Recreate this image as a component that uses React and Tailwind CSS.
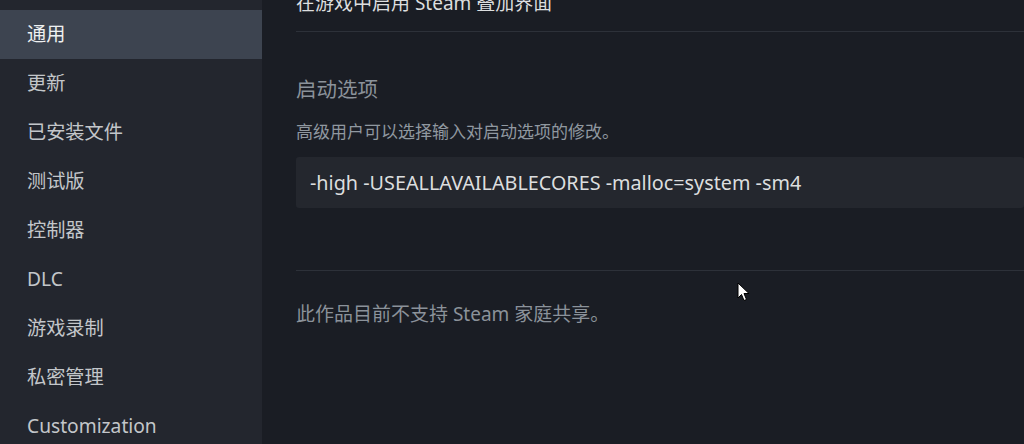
const items = ["通用", "更新", "已安装文件", "测试版", "控制器", "DLC", "游戏录制", "私密管理", "Customization"];

const font = { fontFamily: '"Noto Sans", "Noto Sans CJK SC", sans-serif' };

export default function App() {
  return (
    <div className="relative flex h-[444px] w-[1024px] overflow-hidden bg-[#1a1d24]" style={font}>
      <div className="w-[262px] shrink-0 bg-[#23262e] pt-[10px]">
        {items.map((label, i) => (
          <div
            key={label}
            className={`flex h-[49px] items-center pl-[27px] text-[19.2px] ${
              i === 0 ? "bg-[#3d4450] text-[#eef0f1]" : "text-[#c3c6ca]"
            }`}
          >
            {label}
          </div>
        ))}
      </div>

      <div className="flex-1 pl-[34px]">
        <div className="-mt-[10px] text-[19px] leading-[26px] text-[#dcdedf]">在游戏中启用 Steam 叠加界面</div>
        <div className="mt-[15px] border-t border-[#2d3139]" />

        <div className="mt-[45px] text-[20.5px] leading-[24px] text-[#8b929a]">启动选项</div>
        <div className="mt-[21px] text-[17px] leading-[20px] text-[#9098a0]">高级用户可以选择输入对启动选项的修改。</div>

        <div className="mt-[15px] flex h-[51px] items-center rounded-[3px] bg-[#24272e] pl-[14px] text-[19.8px] text-[#dcdedf]">
          -high -USEALLAVAILABLECORES -malloc=system -sm4
        </div>

        <div className="mt-[62px] border-t border-[#2d3139]" />
        <div className="mt-[31px] text-[19px] leading-[24px] text-[#8b929a]">此作品目前不支持 Steam 家庭共享。</div>
      </div>

      <svg className="absolute left-[737px] top-[282px]" width="14" height="20" viewBox="0 0 14 20">
        <path d="M1 1 L1 16 L4.5 12.5 L7 18.5 L9.5 17.5 L7 11.5 L12 11.5 Z" fill="#ffffff" stroke="#000000" strokeWidth="1" />
      </svg>
    </div>
  );
}
